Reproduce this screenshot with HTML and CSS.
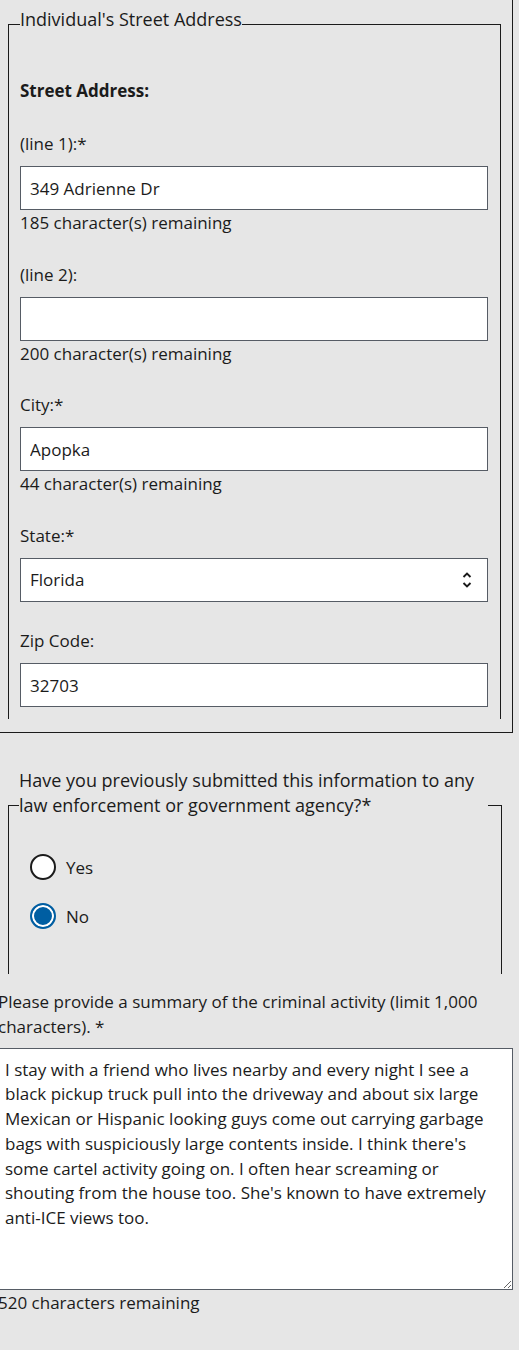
FILE: index.html
```html
<!DOCTYPE html>
<html lang="en">
<head>
<meta charset="utf-8">
<title>Form</title>
<link rel="stylesheet" href="styles.css">
</head>
<body>
<div class="page">
  <div class="outer">
    <fieldset class="fs fs-address">
      <legend class="legend legend-address">Individual's Street Address</legend>
      <div class="subhead">Street Address:</div>
      <div class="field field-first">
        <label class="label" for="line1">(line 1):*</label>
        <input class="input" id="line1" type="text" value="349 Adrienne Dr">
        <div class="hint">185 character(s) remaining</div>
      </div>
      <div class="field">
        <label class="label" for="line2">(line 2):</label>
        <input class="input" id="line2" type="text" value="">
        <div class="hint">200 character(s) remaining</div>
      </div>
      <div class="field">
        <label class="label" for="city">City:*</label>
        <input class="input" id="city" type="text" value="Apopka">
        <div class="hint">44 character(s) remaining</div>
      </div>
      <div class="field">
        <label class="label" for="state">State:*</label>
        <div class="select-wrap">
          <select class="select" id="state">
            <option>Florida</option>
          </select>
          <svg class="select-icon" width="10" height="18" viewBox="0 0 10 18" aria-hidden="true">
            <path d="M1.5 6 L5 2.5 L8.5 6" fill="none" stroke="#1b1b1b" stroke-width="1.9"/>
            <path d="M1.5 12 L5 15.5 L8.5 12" fill="none" stroke="#1b1b1b" stroke-width="1.9"/>
          </svg>
        </div>
      </div>
      <div class="field field-after-select">
        <label class="label" for="zip">Zip Code:</label>
        <input class="input" id="zip" type="text" value="32703">
      </div>
    </fieldset>
  </div>

  <fieldset class="fs fs-radio">
    <legend class="legend legend-radio">Have you previously submitted this information to any law enforcement or government agency?*</legend>
    <label class="radio-row radio-first">
      <input class="radio" type="radio" name="prev" value="yes">
      <span class="radio-label">Yes</span>
    </label>
    <label class="radio-row">
      <input class="radio" type="radio" name="prev" value="no" checked>
      <span class="radio-label">No</span>
    </label>
  </fieldset>

  <div class="summary">
    <label class="label summary-label" for="summary">Please provide a summary of the criminal activity (limit 1,000 characters). *</label>
    <textarea class="textarea" id="summary">I stay with a friend who lives nearby and every night I see a black pickup truck pull into the driveway and about six large Mexican or Hispanic looking guys come out carrying garbage bags with suspiciously large contents inside. I think there's some cartel activity going on. I often hear screaming or shouting from the house too. She's known to have extremely anti-ICE views too.</textarea>
    <div class="hint">520 characters remaining</div>
  </div>
</div>
</body>
</html>
```

FILE: styles.css
```css
html, body {
  margin: 0;
  padding: 0;
  background: #e6e6e6;
  overflow: hidden;
}

body {
  font-family: "Open Sans", "Liberation Sans", sans-serif;
  font-size: 17px;
  line-height: 25px;
  color: #1b1b1b;
}

.page {
  margin-left: -12px;
  width: 525px;
}

.outer {
  border: 1px solid #1b1b1b;
  border-top: none;
  padding: 7px 11px 13px 19px;
}

.fs {
  margin: 0;
  border: 1px solid #1b1b1b;
  border-bottom: none;
  min-width: 0;
}

.fs-address {
  padding: 0 12px 12px 11px;
}

.legend {
  padding: 0;
  font-size: 18px;
  line-height: 25px;
}

.legend-address {
  padding-bottom: 9px;
}

.subhead {
  margin-top: 36.5px;
  font-weight: 700;
}

.field {
  display: flex;
  flex-direction: column;
  margin-top: 26.5px;
}

.field-first {
  margin-top: 28.5px;
}

.label {
  display: block;
  margin-bottom: 10px;
}

.input,
.select {
  box-sizing: border-box;
  height: 44px;
  width: 100%;
  margin: 0;
  border: 1px solid #565c65;
  border-radius: 0;
  background: #fff;
  padding: 0 9px;
  font: inherit;
  color: #1b1b1b;
}

.select {
  appearance: none;
  -webkit-appearance: none;
  outline: none;
}

.select-wrap {
  position: relative;
}

.select-icon {
  position: absolute;
  right: 16px;
  top: 13px;
  pointer-events: none;
}

.hint {
  line-height: 25px;
}

.fs-radio {
  margin: 34.5px 11px 0 20px;
  padding: 0 13px 45px 10px;
}

.legend-radio {
  width: 100%;
  padding-bottom: 25px;
}

.radio-row {
  display: flex;
  align-items: center;
  gap: 10px;
  margin-left: 11px;
  margin-top: 23px;
  height: 26px;
}

.radio-first {
  margin-top: 11.5px;
}

.radio {
  appearance: none;
  -webkit-appearance: none;
  box-sizing: border-box;
  width: 26px;
  height: 26px;
  margin: 0;
  border-radius: 50%;
  border: 2px solid #1b1b1b;
  background: #fff;
  flex: none;
}

.radio:checked {
  border-color: #005ea2;
  background: #005ea2;
  box-shadow: inset 0 0 0 2px #fff;
}

.summary {
  margin: 14.5px 0 0 10px;
}

.summary-label {
  margin-bottom: 9.5px;
}

.textarea {
  display: block;
  box-sizing: border-box;
  width: 100%;
  height: 242px;
  margin: 0;
  padding: 8.5px 6px;
  border: 1px solid #565c65;
  border-radius: 0;
  background: #fff;
  font: inherit;
  line-height: 24.8px;
  color: #1b1b1b;
}
```
